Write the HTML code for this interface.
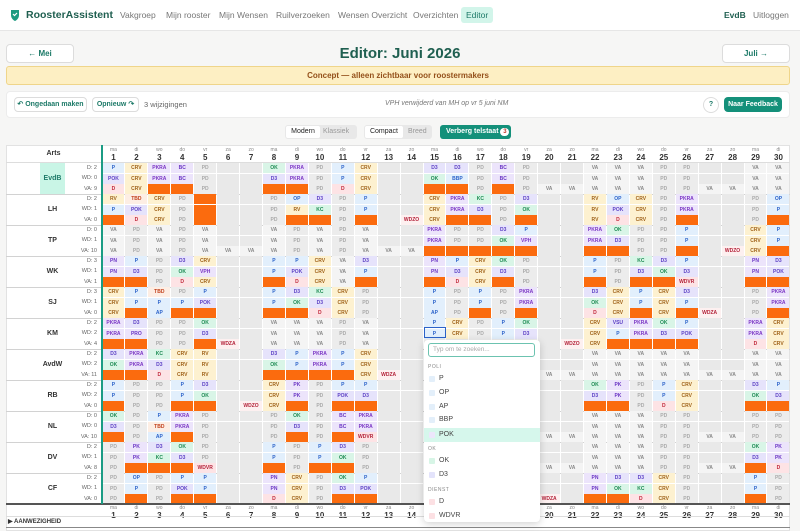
<!DOCTYPE html>
<html><head><meta charset="utf-8">
<style>
*{box-sizing:border-box;margin:0;padding:0}
body{width:800px;height:531px;overflow:hidden;background:#f6f6f5;font-family:"Liberation Sans",sans-serif;position:relative}
.a{position:absolute}
.nav{left:0;top:0;width:800px;height:31px;background:#fff;border-bottom:1px solid #e6e6e6}
.nav span{position:absolute;top:10px;font-size:8.5px;color:#777}
.btn{background:#fff;border:1px solid #dcdcdc;border-radius:4px;color:#1d7a68;font-weight:bold;font-size:8px;text-align:center}
.c{position:absolute;font-size:5px;font-weight:bold;text-align:center;line-height:10px;height:10px}
.lbl{position:absolute;font-size:5.5px;color:#666;text-align:right;width:40px;left:57px}
.hd{position:absolute;text-align:center;width:23px}
.hd i{display:block;font-style:normal;font-size:5px;color:#888;line-height:6px}
.hd b{display:block;font-size:8px;color:#333;line-height:9px}
.dd{left:424px;top:340px;width:116px;height:182px;background:#fff;border-radius:4px;box-shadow:0 2px 8px rgba(0,0,0,.18)}
.dd .sec{position:absolute;left:4px;font-size:5px;color:#888;letter-spacing:.5px}
.dd .it{position:absolute;left:0;width:116px;height:14px;font-size:7px;color:#444;line-height:14px;padding-left:15px}
.dd .it s{position:absolute;left:5px;top:4px;width:6px;height:6px;border-radius:1px}
</style></head><body>
<div class="a nav">
 <svg class="a" style="left:10px;top:9px" width="10" height="12" viewBox="0 0 10 12"><path d="M1 1h8v5c0 3-2 5-4 6c-2-1-4-3-4-6z" fill="#1d9a80"/><path d="M3 5l1.5 1.5L7 4" stroke="#fff" stroke-width="1.2" fill="none"/></svg>
 <span style="left:26px;top:9px;font-size:10.5px;font-weight:bold;color:#1f5f50">RoosterAssistent</span>
 <span style="left:120px">Vakgroep</span><span style="left:166px">Mijn rooster</span><span style="left:219px">Mijn Wensen</span><span style="left:276px">Ruilverzoeken</span><span style="left:338px">Wensen Overzicht</span><span style="left:413px">Overzichten</span>
 <span style="left:461px;top:7px;padding:3px 5px;background:#d2f5ea;color:#1d7a68;border-radius:3px">Editor</span>
 <span style="left:724px;color:#1f5f50;font-weight:bold">EvdB</span><span style="left:753px">Uitloggen</span>
</div>
<div class="a btn" style="left:6px;top:44px;width:68px;height:19px;line-height:17px">← Mei</div>
<div class="a" style="left:0;width:800px;top:45px;text-align:center;font-size:15px;font-weight:bold;color:#1f5f50">Editor: Juni 2026</div>
<div class="a btn" style="left:722px;top:44px;width:68px;height:19px;line-height:17px">Juli →</div>
<div class="a" style="left:6px;top:66px;width:784px;height:19px;background:#fdefc3;border:1px solid #efd58a;border-radius:3px;text-align:center;font-size:8px;line-height:17px;font-weight:bold;color:#94501a">Concept — alleen zichtbaar voor roostermakers</div>
<div class="a" style="left:6px;top:91px;width:784px;height:27px;background:#fff;border:1px solid #ececec;border-radius:4px"></div>
<div class="a btn" style="left:14px;top:97px;width:73px;height:15px;line-height:13px;font-size:7px">↶ Ongedaan maken</div>
<div class="a btn" style="left:92px;top:97px;width:47px;height:15px;line-height:13px;font-size:7px">Opnieuw ↷</div>
<div class="a" style="left:144px;top:100px;font-size:7.5px;color:#666">3 wijzigingen</div>
<div class="a" style="left:385px;top:100px;font-size:7px;color:#777;font-style:italic">VPH verwijderd van MH op vr 5 juni NM</div>
<div class="a" style="left:703px;top:97px;width:16px;height:16px;border:1px solid #ddd;border-radius:50%;font-size:7px;color:#1d7a68;font-weight:bold;text-align:center;line-height:14px;background:#fff">?</div>
<div class="a" style="left:724px;top:97px;width:58px;height:15px;background:#14907a;border-radius:4px;color:#fff;font-size:7px;font-weight:bold;text-align:center;line-height:15px">Naar Feedback</div>
<div class="a" style="left:285px;top:125px;width:72px;height:14px;background:#e8e8e8;border-radius:3px;font-size:7px"><span class="a" style="left:1px;top:1px;width:34px;height:12px;background:#fff;border-radius:2px;text-align:center;line-height:12px;color:#222">Modern</span><span class="a" style="left:38px;top:1px;line-height:12px;color:#999">Klassiek</span></div>
<div class="a" style="left:364px;top:125px;width:68px;height:14px;background:#e8e8e8;border-radius:3px;font-size:7px"><span class="a" style="left:1px;top:1px;width:38px;height:12px;background:#fff;border-radius:2px;text-align:center;line-height:12px;color:#222">Compact</span><span class="a" style="left:44px;top:1px;line-height:12px;color:#999">Breed</span></div>
<div class="a" style="left:440px;top:125px;width:71px;height:14px;background:#14907a;border-radius:3px;color:#fff;font-size:7px;font-weight:bold;line-height:14px;padding-left:6px">Verberg telstaat <span style="display:inline-block;background:#fff;color:#c0392b;border-radius:6px;width:9px;height:8px;line-height:8px;text-align:center;font-size:6px">3</span></div>
<div class="a" id="tbl" style="left:6px;top:145px;width:784px;height:386px;background:#fff;border:1px solid #e2e2e2"></div>
<div id="g"></div>
<div class="a dd">
 <div class="a" style="left:4px;top:3px;width:107px;height:14px;border:1px solid #6cc3b0;border-radius:3px;font-size:6.5px;color:#aaa;line-height:12px;padding-left:4px">Typ om te zoeken...</div>
 <div class="sec" style="top:24px">POLI</div>
 <div class="it" style="top:32px"><s style="background:#e3effa"></s>P</div>
 <div class="it" style="top:46px"><s style="background:#e3effa"></s>OP</div>
 <div class="it" style="top:60px"><s style="background:#e3effa"></s>AP</div>
 <div class="it" style="top:73px"><s style="background:#e3effa"></s>BBP</div>
 <div class="it" style="top:88px;background:#d6f7ec"><s style="background:#ece6fb"></s>POK</div>
 <div class="sec" style="top:106px">OK</div>
 <div class="it" style="top:114px"><s style="background:#d7f5e6"></s>OK</div>
 <div class="it" style="top:128px"><s style="background:#e3e3fb"></s>D3</div>
 <div class="sec" style="top:147px">DIENST</div>
 <div class="it" style="top:155px"><s style="background:#fce0e3"></s>D</div>
 <div class="it" style="top:169px"><s style="background:#fce0e3"></s>WDVR</div>
</div>
<script>
var D=[
["EvdB",["D: 2","WD: 0","VA: 9"],[
"P CRV PKRA BC PD . . OK PKRA PD P CRV . . D3 D3 PD BC PD . . VA VA VA PD PD . . VA VA",
"POK CRV PKRA BC PD . . D3 PKRA PD P CRV . . OK BBP PD BC PD . . VA VA VA PD PD . . VA VA",
"D CRV # # PD . . # # PD D CRV . . # # PD # PD VA VA VA VA VA PD PD VA VA VA VA"]],
["LH",["D: 2","WD: 1","VA: 0"],[
"RV TBD CRV PD # . . PD OP D3 PD P . . CRV PKRA KC PD D3 . . RV OP CRV PD PKRA . . PD OP",
"P POK CRV PD # . . PD RV KC PD P . . CRV PKRA D3 PD OK . . RV POK CRV PD PKRA . . PD P",
"# D CRV PD # . . PD # # PD # . WDZO CRV # # PD # . . RV D CRV PD # . . PD #"]],
["TP",["D: 0","WD: 1","VA: 10"],[
"VA PD VA PD VA . . VA PD VA PD VA . . PKRA PD PD D3 P . . PKRA OK PD PD P . . CRV P",
"VA PD VA PD VA . . VA PD VA PD VA . . PKRA PD PD OK VPH . . PKRA D3 PD PD P . . CRV P",
"VA PD VA PD VA VA VA VA PD VA PD VA VA VA # # # # # . . # # PD PD # . WDZO CRV #"]],
["WK",["D: 3","WD: 1","VA: 1"],[
"PN P PD D3 CRV . . P P CRV VA D3 . . PN P CRV OK PD . . P PD KC D3 P . . PN D3",
"PN D3 PD OK VPH . . P POK CRV VA P . . PN D3 CRV D3 PD . . P PD D3 OK D3 . . PN POK",
"# # PD D CRV . . # D CRV VA # . . # D CRV # PD . . # PD # # WDVR . . # #"]],
["SJ",["D: 3","WD: 1","VA: 0"],[
"CRV P TBD PD P . . P D3 KC CRV PD . . P PD P PD PKRA . . D3 CRV P CRV D3 . . PD PKRA",
"CRV P P P POK . . P OK D3 CRV PD . . P PD P PD PKRA . . OK CRV P CRV P . . PD PKRA",
"CRV # AP # # . . # # D CRV PD . . AP PD # PD # . . D CRV # CRV # WDZA . PD #"]],
["KM",["D: 2","WD: 2","VA: 4"],[
"PKRA D3 PD PD OK . . VA VA VA PD VA . . P CRV PD P OK . . CRV VSU PKRA OK P . . PKRA CRV",
"PKRA PRO PD PD D3 . . VA VA VA PD VA . . P CRV PD P D3 . . CRV P PKRA D3 POK . . PKRA CRV",
"# # PD PD # WDZA . VA VA VA PD VA . . x x x x x . WDZO CRV # # # # . . D CRV"]],
["AvdW",["D: 2","WD: 2","VA: 11"],[
"D3 PKRA KC CRV RV . . D3 P PKRA P CRV . . x x x x x . . VA VA VA VA VA . . VA VA",
"OK PKRA D3 CRV RV . . OK P PKRA P CRV . . x x x x x . . VA VA VA VA VA . . VA VA",
"# # D CRV RV . . # # # # CRV WDZA . x x x x x VA VA VA VA VA VA VA VA VA VA VA"]],
["RB",["D: 2","WD: 2","VA: 0"],[
"P PD PD P D3 . . CRV PK PD P P . . x x x x x . . OK PK PD P CRV . . D3 P",
"P PD PD P OK . . CRV PK PD POK D3 . . x x x x x . . D3 PK PD P CRV . . OK D3",
"# PD PD # # . WDZO CRV # PD # # . . x x x x x . . # # PD D CRV . . # #"]],
["NL",["D: 0","WD: 0","VA: 10"],[
"OK PD P PKRA PD . . PD OK PD BC PKRA . . x x x x x . . VA VA VA PD PD . . PD PD",
"D3 PD TBD PKRA PD . . PD D3 PD BC PKRA . . x x x x x . . VA VA VA PD PD . . PD PD",
"# PD AP # PD . . PD # PD # WDVR . . x x x x x VA VA VA VA VA PD PD VA VA PD PD"]],
["DV",["D: 2","WD: 1","VA: 8"],[
"PD PK D3 OK PD . . P PD P D3 PD . . x x x x x . . VA VA VA PD PD . . OK PK",
"PD PK KC D3 PD . . P PD P OK PD . . x x x x x . . VA VA VA PD PD . . D3 PK",
"PD # # # WDVR . . # PD # # PD . . x x x x x VA VA VA VA VA PD PD VA VA # D"]],
["CF",["D: 2","WD: 1","VA: 0"],[
"PD OP PD P P . . PN CRV PD OK P . . x x x x x . . PN D3 D3 CRV PD . . P PD",
"PD P PD POK P . . PN CRV PD D3 POK . . x x x x x . . PN OK KC CRV PD . . P PD",
"PD # PD # # . . D CRV PD # # . . x x x x x WDZA . # # D CRV PD . . # PD"]]];
var C={P:["#e2effc","#2b62c9"],OP:["#e2effc","#2b62c9"],AP:["#e2effc","#2b62c9"],BBP:["#e2effc","#2b62c9"],
POK:["#e6e3fb","#5b3fc4"],D3:["#e6e3fb","#5b3fc4"],PN:["#ece4fb","#6a35c4"],PK:["#ece4fb","#6a35c4"],PKRA:["#ece4fb","#7a35c4"],BC:["#ece4fb","#6a35c4"],PRO:["#ece4fb","#6a35c4"],VSU:["#e6e3fb","#5b3fc4"],VPH:["#ece4fb","#7a35c4"],
OK:["#d9f5e7","#1c8a52"],KC:["#d9f5e7","#1c8a52"],CRV:["#fdf1d0","#a0631a"],RV:["#fdf1d0","#a0631a"],TBD:["#fdeee4","#c2401b"],
D:["#fde3e5","#c0283b"],WDVR:["#fde3e5","#b4233a"],WDZA:["#fdf0f0","#b4233a"],WDZO:["#fdf0f0","#b4233a"],
PD:["#ececec","#aaa"],VA:["#f4f4f4","#888"]};
var g=document.getElementById('g'),h='';
var X0=102,W=22.93,days=["ma","di","wo","do","vr","za","zo"];
function hdr(y){for(var d=1;d<=30;d++){h+='<div class="hd" style="left:'+(X0+(d-1)*W)+'px;top:'+y+'px"><i>'+days[(d-1)%7]+'</i><b>'+d+'</b></div>';}}
hdr(147);
h+='<div class="a" style="left:6px;top:150px;width:95px;text-align:center;font-size:7px;font-weight:bold;color:#333">Arts</div>';
h+='<div class="a" style="left:6px;top:162px;width:784px;height:1px;background:#ddd"></div>';
for(var i=0;i<D.length;i++){var bt=163+i*31;
 if(i==0)h+='<div class="a" style="left:40px;top:'+bt+'px;width:25px;height:31px;background:#c9f5e6"></div>';
 h+='<div class="a" style="left:40px;top:'+(bt+12)+'px;width:25px;text-align:center;font-size:7px;font-weight:bold;color:'+(i==0?'#1d7a68':'#333')+'">'+D[i][0]+'</div>';
 for(var k=0;k<3;k++){var y=bt+k*10.33;
  h+='<div class="lbl" style="top:'+(y+2)+'px">'+D[i][1][k]+'</div>';
  var t=D[i][2][k].split(' ');
  for(var d=0;d<30;d++){var v=t[d],x=X0+d*W,wk=(d%7==5||d%7==6);var bg,col='#000',tx='';
   if(v=='#'){bg='#fb6b0e';}else if(v=='.'){bg=wk?'#e9e9e9':'#efefef';}else if(v=='x'){bg='#efefef';}else{bg=C[v]?C[v][0]:'#eee';col=C[v]?C[v][1]:'#555';tx=v;}
   h+='<div class="c" style="left:'+(x+.5)+'px;top:'+(y+.2)+'px;width:'+(W-1)+'px;background:'+bg+';color:'+col+'">'+tx+'</div>';}
 }
 h+='<div class="a" style="left:6px;top:'+(bt+31)+'px;width:784px;height:1px;background:#d2d2d2"></div>';
}
h+='<div class="a" style="left:424px;top:327px;width:22px;height:11px;border:1.5px solid #2b62c9"></div>';
h+='<div class="a" style="left:6px;top:503px;width:784px;height:2px;background:#555"></div>';
hdr(505);
h+='<div class="a" style="left:6px;top:516px;width:784px;height:1px;background:#ddd"></div>';
h+='<div class="a" style="left:8px;top:518px;font-size:6px;font-weight:bold;color:#333">▶ AANWEZIGHEID</div>';
h+='<div class="a" style="left:6px;top:527px;width:784px;height:1px;background:#888"></div>';
h+='<div class="a" style="left:101px;top:145px;width:2px;height:359px;background:#1b9c84"></div>';
g.innerHTML=h;
</script>
</body></html>
